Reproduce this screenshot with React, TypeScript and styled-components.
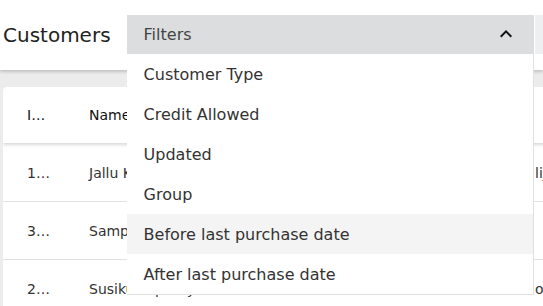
import * as React from 'react'
import styled, { createGlobalStyle } from 'styled-components'

const filters = [
  'Customer Type',
  'Credit Allowed',
  'Updated',
  'Group',
  'Before last purchase date',
  'After last purchase date'
]

const customers = [
  { id: '1024', name: 'Jallu Kumar', email: 'lijo@jallu.in' },
  { id: '3187', name: 'Sample Customer', email: '' },
  { id: '2265', name: 'Susiku Tripathy', email: 'op.susiku@mail.com' }
]

export default () => {
  const [open] = React.useState(true)
  const [hovered, setHovered] = React.useState(4)
  return (
    <>
      <GlobalStyle />
      <Header>
        <Title>Customers</Title>
        <FilterWrap>
          <FilterButton>
            <span>Filters</span>
            <svg width="24" height="24" viewBox="0 0 24 24">
              <path
                d="M12 8l-6 6 1.41 1.41L12 10.83l4.59 4.58L18 14z"
                fill="#111"
              />
            </svg>
          </FilterButton>
          {open && (
            <Menu>
              {filters.map((f, i) => (
                <MenuItem
                  key={f}
                  $active={i === hovered}
                  onMouseEnter={() => setHovered(i)}
                >
                  {f}
                </MenuItem>
              ))}
            </Menu>
          )}
        </FilterWrap>
        <SideButton />
      </Header>
      <Content>
        <Card>
          <Table>
            <colgroup>
              <col style={{ width: 62 }} />
              <col style={{ width: 446 }} />
              <col style={{ width: 212 }} />
            </colgroup>
            <thead>
              <HeadRow>
                <Th>ID</Th>
                <Th>Name</Th>
                <Th $indent>Email</Th>
              </HeadRow>
            </thead>
            <tbody>
              {customers.map(c => (
                <Row key={c.id}>
                  <Td>{c.id}</Td>
                  <Td>{c.name}</Td>
                  <Td>{c.email}</Td>
                </Row>
              ))}
            </tbody>
          </Table>
        </Card>
      </Content>
    </>
  )
}

const GlobalStyle = createGlobalStyle`
  body {
    margin: 0;
    background: #ececec;
    font-family: 'DejaVu Sans', 'Noto Sans', sans-serif;
    color: #333;
    overflow: hidden;
  }
`

const Header = styled.header`
  position: relative;
  z-index: 2;
  display: flex;
  align-items: flex-start;
  height: 70px;
  padding: 15px 0 0 3px;
  box-sizing: border-box;
  background: #fff;
  box-shadow: 0 2px 3px rgba(0, 0, 0, 0.18);
`

const Title = styled.h1`
  margin: 0 16px 0 0;
  width: 108px;
  line-height: 40px;
  font-size: 20px;
  font-weight: 500;
  color: #222;
  white-space: nowrap;
`

const FilterWrap = styled.div`
  position: relative;
  width: 407px;
  flex-shrink: 0;
`

const FilterButton = styled.div`
  display: flex;
  align-items: center;
  justify-content: space-between;
  height: 39px;
  padding: 0 16px 0 17px;
  background: #dcdddf;
  font-size: 16px;
  line-height: 40px;
  color: #444;
  svg {
    margin-top: -1px;
  }
`

const SideButton = styled.div`
  width: 20px;
  height: 39px;
  margin-left: 1px;
  background: #eeeff0;
  flex-shrink: 0;
`

const Menu = styled.ul`
  position: absolute;
  left: 0;
  top: 39px;
  width: 406px;
  margin: 0;
  padding: 0;
  list-style: none;
  background: #fff;
  border-right: 1px solid #e0e0e0;
  border-bottom: 1px solid #e0e0e0;
`

const MenuItem = styled.li<{ $active: boolean }>`
  height: 40px;
  line-height: 42px;
  padding-left: 17px;
  font-size: 16px;
  color: #333;
  background: ${p => (p.$active ? '#f4f4f4' : '#fff')};
`

const Content = styled.main`
  padding: 17px 0 0 3px;
`

const Card = styled.div`
  width: 720px;
  background: #fff;
  border-radius: 4px;
  overflow: hidden;
`

const Table = styled.table`
  width: 720px;
  border-collapse: collapse;
  table-layout: fixed;
  font-size: 14px;
`

const HeadRow = styled.tr`
  height: 56px;
  box-shadow: 0 2px 3px rgba(0, 0, 0, 0.15);
`

const Th = styled.th<{ $indent?: boolean }>`
  padding: 0 24px 0 ${p => (p.$indent ? '40px' : '24px')};
  text-align: left;
  font-weight: 500;
  color: #111;
  overflow: hidden;
  text-overflow: ellipsis;
  white-space: nowrap;
`

const Row = styled.tr`
  height: 58px;
  border-bottom: 1px solid #e2e2e2;
`

const Td = styled.td`
  padding: 2px 24px 0;
  color: #333;
  overflow: hidden;
  text-overflow: ellipsis;
  white-space: nowrap;
`
